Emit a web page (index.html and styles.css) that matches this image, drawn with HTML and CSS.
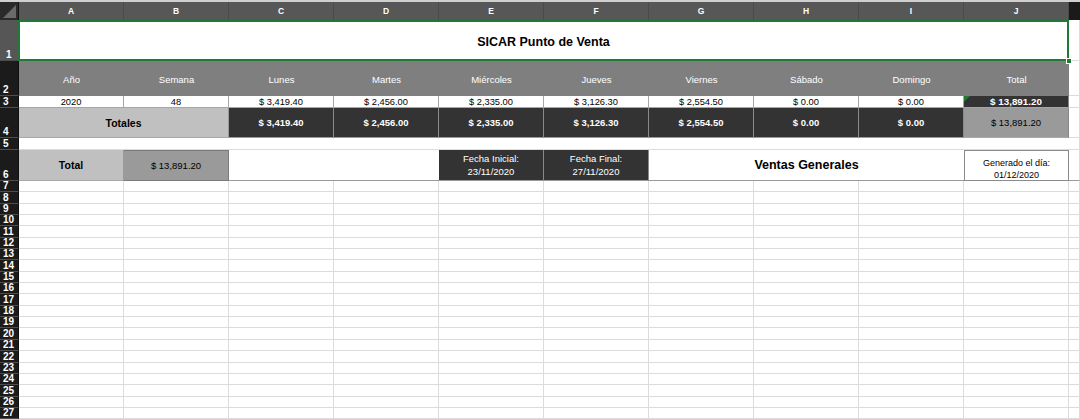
FILE: index.html
```html
<!DOCTYPE html>
<html lang="es">
<head>
<meta charset="utf-8">
<title>SICAR Punto de Venta</title>
<link rel="stylesheet" href="styles.css">
</head>
<body>
<div class="sheet">
  <div class="strip"></div>

  <div class="corner"></div>
  <div class="ch">A</div><div class="ch">B</div><div class="ch">C</div><div class="ch">D</div><div class="ch">E</div>
  <div class="ch">F</div><div class="ch">G</div><div class="ch">H</div><div class="ch">I</div><div class="ch">J</div>
  <div class="ch off"></div>

  <div class="rh sel">1</div>
  <div class="title">SICAR Punto de Venta<span class="handle"></span></div>
  <div class="c"></div>

  <div class="rh">2</div>
  <div class="hd">Año</div><div class="hd">Semana</div><div class="hd">Lunes</div><div class="hd">Martes</div>
  <div class="hd">Miércoles</div><div class="hd">Jueves</div><div class="hd">Viernes</div><div class="hd">Sábado</div>
  <div class="hd">Domingo</div><div class="hd">Total</div>
  <div class="c"></div>

  <div class="rh">3</div>
  <div class="v">2020</div><div class="v">48</div><div class="v">$ 3,419.40</div><div class="v">$ 2,456.00</div>
  <div class="v">$ 2,335.00</div><div class="v">$ 3,126.30</div><div class="v">$ 2,554.50</div><div class="v">$ 0.00</div>
  <div class="v">$ 0.00</div><div class="v vt">$ 13,891.20</div>
  <div class="c"></div>

  <div class="rh">4</div>
  <div class="tot span2">Totales</div>
  <div class="dk">$ 3,419.40</div><div class="dk">$ 2,456.00</div><div class="dk">$ 2,335.00</div><div class="dk">$ 3,126.30</div>
  <div class="dk">$ 2,554.50</div><div class="dk">$ 0.00</div><div class="dk">$ 0.00</div>
  <div class="gr">$ 13,891.20</div>
  <div class="c"></div>

  <div class="rh">5</div>
  <div class="blank"></div>
  <div class="c"></div>

  <div class="rh">6</div>
  <div class="tot one">Total</div>
  <div class="gr gr6">$ 13,891.20</div>
  <div class="w span2"></div>
  <div class="dk two">Fecha Inicial:<br>23/11/2020</div>
  <div class="dk two">Fecha Final:<br>27/11/2020</div>
  <div class="w span3 big">Ventas Generales</div>
  <div class="gen">Generado el día:<br>01/12/2020</div>
  <div class="c last6"></div>

  <div class="rh">7</div><div class="c"></div><div class="c"></div><div class="c"></div><div class="c"></div><div class="c"></div><div class="c"></div><div class="c"></div><div class="c"></div><div class="c"></div><div class="c"></div><div class="c"></div>
  <div class="rh">8</div><div class="c"></div><div class="c"></div><div class="c"></div><div class="c"></div><div class="c"></div><div class="c"></div><div class="c"></div><div class="c"></div><div class="c"></div><div class="c"></div><div class="c"></div>
  <div class="rh">9</div><div class="c"></div><div class="c"></div><div class="c"></div><div class="c"></div><div class="c"></div><div class="c"></div><div class="c"></div><div class="c"></div><div class="c"></div><div class="c"></div><div class="c"></div>
  <div class="rh">10</div><div class="c"></div><div class="c"></div><div class="c"></div><div class="c"></div><div class="c"></div><div class="c"></div><div class="c"></div><div class="c"></div><div class="c"></div><div class="c"></div><div class="c"></div>
  <div class="rh">11</div><div class="c"></div><div class="c"></div><div class="c"></div><div class="c"></div><div class="c"></div><div class="c"></div><div class="c"></div><div class="c"></div><div class="c"></div><div class="c"></div><div class="c"></div>
  <div class="rh">12</div><div class="c"></div><div class="c"></div><div class="c"></div><div class="c"></div><div class="c"></div><div class="c"></div><div class="c"></div><div class="c"></div><div class="c"></div><div class="c"></div><div class="c"></div>
  <div class="rh">13</div><div class="c"></div><div class="c"></div><div class="c"></div><div class="c"></div><div class="c"></div><div class="c"></div><div class="c"></div><div class="c"></div><div class="c"></div><div class="c"></div><div class="c"></div>
  <div class="rh">14</div><div class="c"></div><div class="c"></div><div class="c"></div><div class="c"></div><div class="c"></div><div class="c"></div><div class="c"></div><div class="c"></div><div class="c"></div><div class="c"></div><div class="c"></div>
  <div class="rh">15</div><div class="c"></div><div class="c"></div><div class="c"></div><div class="c"></div><div class="c"></div><div class="c"></div><div class="c"></div><div class="c"></div><div class="c"></div><div class="c"></div><div class="c"></div>
  <div class="rh">16</div><div class="c"></div><div class="c"></div><div class="c"></div><div class="c"></div><div class="c"></div><div class="c"></div><div class="c"></div><div class="c"></div><div class="c"></div><div class="c"></div><div class="c"></div>
  <div class="rh">17</div><div class="c"></div><div class="c"></div><div class="c"></div><div class="c"></div><div class="c"></div><div class="c"></div><div class="c"></div><div class="c"></div><div class="c"></div><div class="c"></div><div class="c"></div>
  <div class="rh">18</div><div class="c"></div><div class="c"></div><div class="c"></div><div class="c"></div><div class="c"></div><div class="c"></div><div class="c"></div><div class="c"></div><div class="c"></div><div class="c"></div><div class="c"></div>
  <div class="rh">19</div><div class="c"></div><div class="c"></div><div class="c"></div><div class="c"></div><div class="c"></div><div class="c"></div><div class="c"></div><div class="c"></div><div class="c"></div><div class="c"></div><div class="c"></div>
  <div class="rh">20</div><div class="c"></div><div class="c"></div><div class="c"></div><div class="c"></div><div class="c"></div><div class="c"></div><div class="c"></div><div class="c"></div><div class="c"></div><div class="c"></div><div class="c"></div>
  <div class="rh">21</div><div class="c"></div><div class="c"></div><div class="c"></div><div class="c"></div><div class="c"></div><div class="c"></div><div class="c"></div><div class="c"></div><div class="c"></div><div class="c"></div><div class="c"></div>
  <div class="rh">22</div><div class="c"></div><div class="c"></div><div class="c"></div><div class="c"></div><div class="c"></div><div class="c"></div><div class="c"></div><div class="c"></div><div class="c"></div><div class="c"></div><div class="c"></div>
  <div class="rh">23</div><div class="c"></div><div class="c"></div><div class="c"></div><div class="c"></div><div class="c"></div><div class="c"></div><div class="c"></div><div class="c"></div><div class="c"></div><div class="c"></div><div class="c"></div>
  <div class="rh">24</div><div class="c"></div><div class="c"></div><div class="c"></div><div class="c"></div><div class="c"></div><div class="c"></div><div class="c"></div><div class="c"></div><div class="c"></div><div class="c"></div><div class="c"></div>
  <div class="rh">25</div><div class="c"></div><div class="c"></div><div class="c"></div><div class="c"></div><div class="c"></div><div class="c"></div><div class="c"></div><div class="c"></div><div class="c"></div><div class="c"></div><div class="c"></div>
  <div class="rh">26</div><div class="c"></div><div class="c"></div><div class="c"></div><div class="c"></div><div class="c"></div><div class="c"></div><div class="c"></div><div class="c"></div><div class="c"></div><div class="c"></div><div class="c"></div>
  <div class="rh">27</div><div class="c"></div><div class="c"></div><div class="c"></div><div class="c"></div><div class="c"></div><div class="c"></div><div class="c"></div><div class="c"></div><div class="c"></div><div class="c"></div><div class="c"></div>
</div>
</body>
</html>
```

FILE: styles.css
```css
* { box-sizing: border-box; margin: 0; padding: 0; }

html, body { width: 1080px; height: 419px; overflow: hidden; }

body {
  margin: 0;
  background: #ffffff;
  font-family: "Liberation Sans", Arial, Helvetica, sans-serif;
  color: #000;
}

.sheet {
  display: grid;
  grid-template-columns: 19px repeat(10, 105px) 11px;
  grid-template-rows: 2px 18px 41px 35px 12px 30px 12px 31px repeat(21, 11.35px);
  width: 1080px;
  height: 419px;
}

.strip { grid-column: 1 / -1; background: #cfcfcf; }

.corner {
  background: #2a2a2a;
  border-right: 1px solid #111;
  position: relative;
  overflow: hidden;
}
.corner::after {
  content: "";
  position: absolute;
  right: 2px;
  bottom: 2px;
  width: 0;
  height: 0;
  border-left: 13px solid transparent;
  border-bottom: 13px solid #6a6a6a;
}

.ch {
  background: #575757;
  color: #fff;
  font-weight: bold;
  font-size: 8.5px;
  display: flex;
  align-items: center;
  justify-content: center;
  border-right: 1px solid #4a4a4a;
}
.ch.off { background: #1a1a1a; border-right: none; }

.rh {
  background: #1b1b1b;
  color: #fff;
  font-weight: bold;
  font-size: 10px;
  line-height: 10px;
  display: flex;
  align-items: flex-end;
  padding-left: 3px;
  border-bottom: 1px solid #4d4d4d;
  border-right: 1px solid #0e0e0e;
  overflow: hidden;
}
.rh.sel { background: #565656; padding-left: 6px; }

.c {
  border-right: 1px solid #dcdcdc;
  border-bottom: 1px solid #dcdcdc;
}

.title {
  grid-column: span 10;
  margin-left: -1px;
  position: relative;
  background: #fff;
  box-shadow: inset 0 0 0 2px #1f7a35;
  display: flex;
  align-items: center;
  justify-content: center;
  font-weight: bold;
  font-size: 12.5px;
  padding-top: 2px;
}
.handle {
  position: absolute;
  right: -3px;
  bottom: -3px;
  width: 6px;
  height: 6px;
  background: #1f7a35;
  border: 1px solid #fff;
}

.hd {
  background: #7f7f7f;
  color: #fff;
  font-size: 9.5px;
  display: flex;
  align-items: center;
  justify-content: center;
  padding-top: 1px;
}

.v {
  border-right: 1px solid #a6a6a6;
  border-bottom: 1px solid #a6a6a6;
  font-size: 9.3px;
  display: flex;
  align-items: center;
  justify-content: center;
  line-height: 10px;
}
.vt {
  background: #333;
  color: #fff;
  font-weight: bold;
  font-size: 9.8px;
  position: relative;
  border-right: 1px solid #888;
}
.vt::before {
  content: "";
  position: absolute;
  left: 0;
  top: 0;
  width: 0;
  height: 0;
  border-top: 6px solid #1f7a35;
  border-right: 6px solid transparent;
}

.span2 { grid-column: span 2; }
.span3 { grid-column: span 3; }

.tot {
  background: #c0c0c0;
  font-weight: bold;
  font-size: 10.5px;
  display: flex;
  align-items: center;
  justify-content: center;
  border-right: 1px solid #9a9a9a;
  border-bottom: 1px solid #a8a8a8;
}

.dk {
  background: #333;
  color: #fff;
  font-weight: bold;
  font-size: 9.5px;
  display: flex;
  align-items: center;
  justify-content: center;
  border-right: 1px solid #8a8a8a;
  border-bottom: 1px solid #9a9a9a;
}

.gr {
  background: #9a9a9a;
  font-size: 9.5px;
  display: flex;
  align-items: center;
  justify-content: center;
  border-right: 1px solid #888;
  border-bottom: 1px solid #a8a8a8;
}
.gr6 { border: 1px solid #7a7a7a; border-left: none; }

.blank {
  grid-column: span 10;
  border-bottom: 1px solid #dcdcdc;
}

.w {
  background: #fff;
  border-bottom: 1px solid #9a9a9a;
  display: flex;
  align-items: center;
  justify-content: center;
}
.big { font-weight: bold; font-size: 12.5px; }

.two {
  font-weight: normal;
  font-size: 9.5px;
  line-height: 13px;
  text-align: center;
  border-bottom: 1px solid #9a9a9a;
}

.gen {
  border: 1px solid #8a8a8a;
  font-size: 9px;
  line-height: 12px;
  text-align: center;
  display: flex;
  align-items: center;
  justify-content: center;
  padding-top: 6px;
  background: #fff;
}

.last6 { border-bottom: 1px solid #9a9a9a; }
```
